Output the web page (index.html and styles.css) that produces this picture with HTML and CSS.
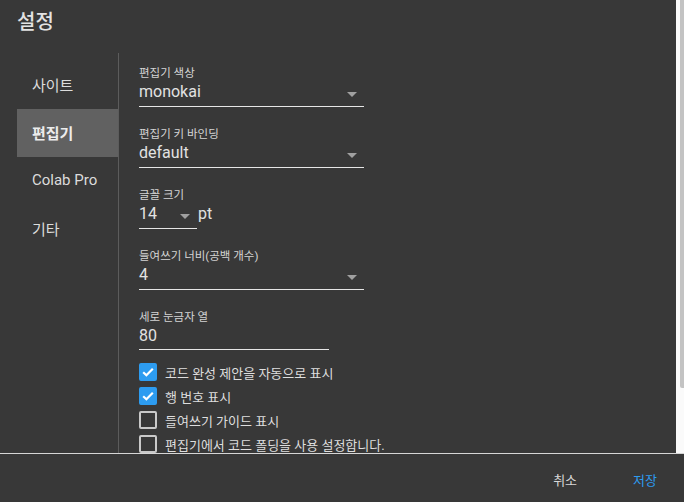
FILE: index.html
```html
<!DOCTYPE html>
<html lang="ko">
<head>
<meta charset="utf-8">
<title>설정</title>
<link rel="stylesheet" href="styles.css">
</head>
<body>
<div class="dialog">
  <div class="top">
    <div class="scroll">
      <h1 class="title">설정</h1>
      <div class="body">
        <nav class="nav">
          <div class="nav-item">사이트</div>
          <div class="nav-item active">편집기</div>
          <div class="nav-item">Colab Pro</div>
          <div class="nav-item">기타</div>
        </nav>
        <div class="content">
          <div class="field">
            <div class="label">편집기 색상</div>
            <div class="select wide"><span class="value">monokai</span><span class="arrow"></span></div>
          </div>
          <div class="field">
            <div class="label">편집기 키 바인딩</div>
            <div class="select wide"><span class="value">default</span><span class="arrow"></span></div>
          </div>
          <div class="field">
            <div class="label">글꼴 크기</div>
            <div class="inline">
              <div class="select small"><span class="value">14</span><span class="arrow"></span></div>
              <span class="unit">pt</span>
            </div>
          </div>
          <div class="field">
            <div class="label">들여쓰기 너비(공백 개수)</div>
            <div class="select wide"><span class="value">4</span><span class="arrow"></span></div>
          </div>
          <div class="field">
            <div class="label">세로 눈금자 열</div>
            <div class="input"><span class="value">80</span></div>
          </div>
          <div class="checks">
            <label class="check"><span class="box checked"><svg viewBox="0 0 18 18" width="18" height="18"><path d="M4.2 9.2l3.2 3.1 6.4-6.5" fill="none" stroke="#fff" stroke-width="2.2"/></svg></span><span class="check-text">코드 완성 제안을 자동으로 표시</span></label>
            <label class="check"><span class="box checked"><svg viewBox="0 0 18 18" width="18" height="18"><path d="M4.2 9.2l3.2 3.1 6.4-6.5" fill="none" stroke="#fff" stroke-width="2.2"/></svg></span><span class="check-text">행 번호 표시</span></label>
            <label class="check"><span class="box"></span><span class="check-text">들여쓰기 가이드 표시</span></label>
            <label class="check"><span class="box"></span><span class="check-text">편집기에서 코드 폴딩을 사용 설정합니다.</span></label>
          </div>
        </div>
      </div>
    </div>
    <div class="scrollbar"><div class="thumb"></div></div>
  </div>
  <div class="footer">
    <span class="btn">취소</span>
    <span class="btn primary">저장</span>
  </div>
</div>
</body>
</html>
```

FILE: styles.css
```css
* { box-sizing: border-box; }
html, body {
  margin: 0;
  padding: 0;
  background: #383838;
}
body {
  font-family: Roboto, "Noto Sans CJK KR", sans-serif;
  color: #e0e0e0;
}
.dialog {
  width: 684px;
  height: 502px;
  display: flex;
  flex-direction: column;
  background: #383838;
}
.top {
  height: 453px;
  flex: none;
  display: flex;
}
.scroll {
  flex: 1;
  overflow: hidden;
}
.scrollbar {
  width: 8px;
  flex: none;
  background: #fafafa;
  display: flex;
  justify-content: flex-end;
}
.thumb {
  width: 4px;
  height: 388px;
  background: #c3c3c3;
  border-radius: 0 0 0 2px;
}
.title {
  margin: 0;
  padding: 9px 17px 0;
  height: 53px;
  font-size: 20px;
  line-height: 26px;
  font-weight: 500;
  color: #e3e3e3;
}
.body {
  display: flex;
  padding-left: 17px;
}
.nav {
  width: 102px;
  flex: none;
  border-right: 1px solid #5c5c5c;
  padding-top: 8px;
  padding-bottom: 76px;
}
.nav-item {
  height: 48px;
  display: flex;
  align-items: center;
  padding-left: 15px;
  padding-bottom: 2px;
  font-size: 15px;
  color: #dcdcdc;
}
.nav-item.active {
  background: #616161;
  font-weight: 700;
  color: #ececec;
}
.content {
  padding-left: 20px;
  padding-top: 13px;
  flex: 1;
}
.field {
  margin-bottom: 20px;
}
.label {
  font-size: 11.5px;
  line-height: 14px;
  color: #d4d4d4;
  margin-bottom: 2px;
}
.select, .input {
  position: relative;
  height: 25px;
  border-bottom: 1px solid #e6e6e6;
  font-size: 16px;
  line-height: 20px;
  color: #e2e2e2;
}
.input { height: 24px; width: 190px; }
.select.wide { width: 225px; }
.select.small { width: 58px; }
.arrow {
  position: absolute;
  right: 7px;
  top: 10px;
  width: 0;
  height: 0;
  border-left: 5px solid transparent;
  border-right: 5px solid transparent;
  border-top: 5px solid #a0a0a0;
}
.inline {
  display: flex;
  align-items: flex-start;
}
.unit {
  font-size: 16px;
  line-height: 20px;
  margin-left: 1px;
  color: #e2e2e2;
}
.checks {
  margin-top: -10px;
  display: flex;
  flex-direction: column;
}
.check {
  height: 24px;
  display: flex;
  align-items: center;
  gap: 8px;
}
.box {
  width: 18px;
  height: 18px;
  border: 2px solid #c9c9c9;
  border-radius: 2px;
  flex: none;
  position: relative;
}
.box.checked {
  background: #2d9cf0;
  border-color: #2d9cf0;
}
.box svg {
  position: absolute;
  left: -2px;
  top: -2px;
}
.check-text {
  font-size: 13px;
  color: #dedede;
}
.footer {
  flex: 1;
  border-top: 1px solid #d6d6d6;
  display: flex;
  align-items: center;
  justify-content: flex-end;
  padding-right: 27px;
  padding-top: 2px;
  gap: 56px;
}
.btn {
  font-size: 13px;
  color: #d9d9d9;
}
.btn.primary {
  color: #2d9cf0;
}
```
